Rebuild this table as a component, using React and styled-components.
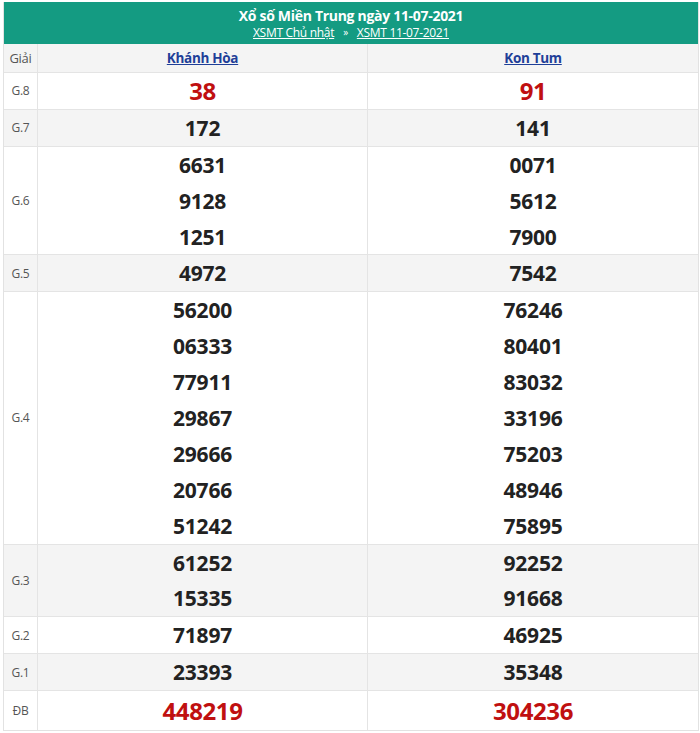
import React from "react";
import styled, { createGlobalStyle } from "styled-components";

const GlobalStyle = createGlobalStyle`
  body {
    margin: 0;
    background: #fff;
    font-family: "Open Sans", "Liberation Sans", sans-serif;
  }
`;

const results = [
  { label: "G.8", kh: ["38"], kt: ["91"], red: true },
  { label: "G.7", kh: ["172"], kt: ["141"] },
  { label: "G.6", kh: ["6631", "9128", "1251"], kt: ["0071", "5612", "7900"] },
  { label: "G.5", kh: ["4972"], kt: ["7542"] },
  {
    label: "G.4",
    kh: ["56200", "06333", "77911", "29867", "29666", "20766", "51242"],
    kt: ["76246", "80401", "83032", "33196", "75203", "48946", "75895"],
  },
  { label: "G.3", kh: ["61252", "15335"], kt: ["92252", "91668"] },
  { label: "G.2", kh: ["71897"], kt: ["46925"] },
  { label: "G.1", kh: ["23393"], kt: ["35348"] },
  { label: "ĐB", kh: ["448219"], kt: ["304236"], red: true, big: true },
];

const App = () => {
  return (
    <Page>
      <GlobalStyle />
      <Board>
        <Banner>
          <Title>Xổ số Miền Trung ngày 11-07-2021</Title>
          <Crumbs>
            <a href="#">XSMT Chủ nhật</a>
            <Sep>»</Sep>
            <a href="#">XSMT 11-07-2021</a>
          </Crumbs>
        </Banner>
        <Row $alt>
          <Label $head>Giải</Label>
          <Province>
            <a href="#">Khánh Hòa</a>
          </Province>
          <Province $last>
            <a href="#">Kon Tum</a>
          </Province>
        </Row>
        {results.map((r, i) => (
          <Row key={r.label} $alt={i % 2 === 1}>
            <Label>{r.label}</Label>
            <Numbers>
              {r.kh.map((n) => (
                <Num key={n} $red={r.red} $big={r.big}>
                  {n}
                </Num>
              ))}
            </Numbers>
            <Numbers $last>
              {r.kt.map((n) => (
                <Num key={n} $red={r.red} $big={r.big}>
                  {n}
                </Num>
              ))}
            </Numbers>
          </Row>
        ))}
      </Board>
    </Page>
  );
};

export default App;

const Page = styled.div`
  padding: 2px 3px;
`;

const Board = styled.div`
  width: 694px;
  border: 1px solid #e2e2e2;
  border-top: none;
`;

const Banner = styled.div`
  background: #149b82;
  color: #fff;
  height: 42px;
  display: flex;
  flex-direction: column;
  align-items: center;
  justify-content: center;
  gap: 1px;
`;

const Title = styled.div`
  font-weight: 700;
  font-size: 14px;
  letter-spacing: -0.3px;
  line-height: 17px;
`;

const Crumbs = styled.div`
  font-size: 12px;
  line-height: 15px;
  letter-spacing: -0.3px;
  display: flex;
  align-items: center;

  a {
    color: #fff;
    text-decoration: underline;
  }
`;

const Sep = styled.span`
  margin: 0 9px;
  font-size: 10px;
`;

const Row = styled.div`
  display: grid;
  grid-template-columns: 34px 1fr 1fr;
  background: ${(p) => (p.$alt ? "#f4f4f4" : "#fff")};
  border-bottom: 1px solid #e4e4e4;

  &:last-child {
    border-bottom: none;
  }
`;

const Label = styled.div`
  display: flex;
  align-items: center;
  justify-content: center;
  border-right: 1px solid #e4e4e4;
  font-size: ${(p) => (p.$head ? "13px" : "12px")};
  color: #555;
  letter-spacing: -0.3px;
  min-height: 28px;
`;

const Province = styled.div`
  display: flex;
  align-items: center;
  justify-content: center;
  border-right: ${(p) => (p.$last ? "none" : "1px solid #e4e4e4")};

  a {
    color: #1f3f98;
    font-weight: 700;
    font-size: 13.5px;
    letter-spacing: -0.3px;
  }
`;

const Numbers = styled.div`
  display: flex;
  flex-direction: column;
  align-items: center;
  border-right: ${(p) => (p.$last ? "none" : "1px solid #e4e4e4")};
`;

const Num = styled.div`
  height: ${(p) => (p.$big ? "39px" : "35.9px")};
  display: flex;
  align-items: center;
  font-weight: 700;
  font-size: ${(p) => (p.$red ? "24px" : "21px")};
  letter-spacing: ${(p) => (p.$red ? "-0.4px" : "-0.2px")};
  color: ${(p) => (p.$red ? "#c01010" : "#222")};
`;
